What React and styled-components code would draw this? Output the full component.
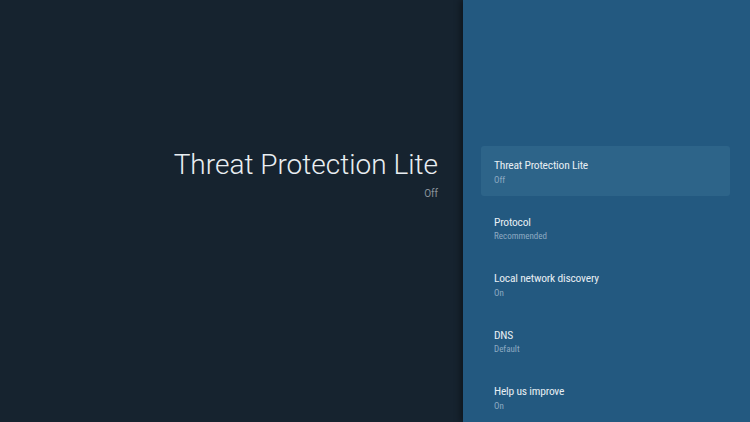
import React from "react";
import styled, { createGlobalStyle } from "styled-components";

const Global = createGlobalStyle`
  html, body { margin: 0; padding: 0; background: #16232f; }
  body { font-family: Roboto, "Noto Sans", sans-serif; -webkit-font-smoothing: antialiased; }
`;

const Screen = styled.div`
  width: 750px;
  height: 422px;
  display: flex;
  overflow: hidden;
  background: #16232f;
`;

const Main = styled.div`
  flex: 1;
  display: flex;
  flex-direction: column;
  align-items: flex-end;
  padding: 148px 25px 0 0;
`;

const BigTitle = styled.div`
  font-family: Roboto, sans-serif;
  font-weight: 300;
  font-size: 28px;
  line-height: 34px;
  color: #e9eef2;
  white-space: nowrap;
`;

const BigState = styled.div`
  margin-top: 6px;
  font-family: Roboto, sans-serif;
  font-size: 10px;
  line-height: 12px;
  color: #8a939c;
`;

const Panel = styled.div`
  width: 287px;
  flex-shrink: 0;
  background: #235980;
  box-shadow: -3px 0 6px rgba(0, 0, 0, 0.35);
  display: flex;
  flex-direction: column;
  gap: 6.7px;
  padding: 146px 20px 0 18px;
  box-sizing: border-box;
`;

const Item = styled.div`
  height: 50px;
  box-sizing: border-box;
  padding: 12px 13px 0;
  border-radius: 3px;
  background: ${(p) => (p.$active ? "#2d6489" : "transparent")};
`;

const ItemTitle = styled.div`
  font-family: "Roboto Condensed", "Liberation Sans Narrow", Roboto, sans-serif;
  font-stretch: condensed;
  font-size: 11.5px;
  letter-spacing: -0.2px;
  line-height: 14px;
  color: #e7eef3;
  white-space: nowrap;
`;

const ItemValue = styled.div`
  margin-top: 2.5px;
  font-family: "Roboto Condensed", "Liberation Sans Narrow", Roboto, sans-serif;
  font-stretch: condensed;
  font-size: 9px;
  line-height: 11px;
  color: #8eaac2;
`;

const items = [
  { title: "Threat Protection Lite", value: "Off", active: true },
  { title: "Protocol", value: "Recommended" },
  { title: "Local network discovery", value: "On" },
  { title: "DNS", value: "Default" },
  { title: "Help us improve", value: "On" },
];

export default function App() {
  return (
    <>
      <Global />
      <Screen>
        <Main>
          <BigTitle>Threat Protection Lite</BigTitle>
          <BigState>Off</BigState>
        </Main>
        <Panel>
          {items.map((it) => (
            <Item key={it.title} $active={it.active}>
              <ItemTitle>{it.title}</ItemTitle>
              <ItemValue>{it.value}</ItemValue>
            </Item>
          ))}
        </Panel>
      </Screen>
    </>
  );
}
